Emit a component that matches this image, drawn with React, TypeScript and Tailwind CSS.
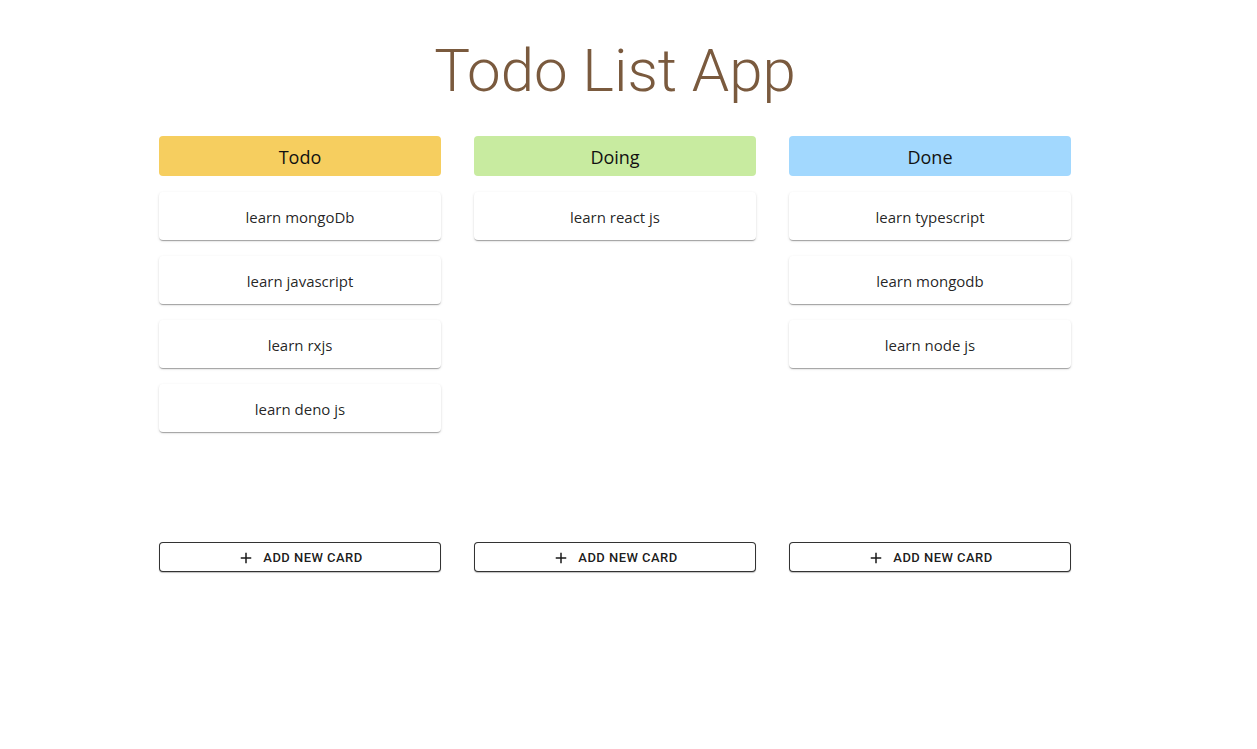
import React from "react";

const columns = [
  { title: "Todo", color: "bg-[#f6ce5f]", cards: ["learn mongoDb", "learn javascript", "learn rxjs", "learn deno js"] },
  { title: "Doing", color: "bg-[#c8eba0]", cards: ["learn react js"] },
  { title: "Done", color: "bg-[#a2d8fe]", cards: ["learn typescript", "learn mongodb", "learn node js"] },
];

function Plus() {
  return (
    <svg width="18" height="18" viewBox="0 0 24 24" fill="currentColor" aria-hidden="true">
      <path d="M19 13h-6v6h-2v-6H5v-2h6V5h2v6h6v2z" />
    </svg>
  );
}

export default function App() {
  return (
    <div className="min-h-[749px] bg-white pr-[27px]">
      <h1 className="pt-[35px] text-center text-[60px] leading-[1.2] font-light text-[#7a5a3e] [font-family:Roboto,sans-serif]">
        Todo List App
      </h1>
      <div className="mt-[29px] flex justify-center">
        <div className="grid grid-cols-[282px_282px_282px] gap-x-[33px]">
          {columns.map((col) => (
            <div key={col.title} className="flex flex-col">
              <div
                className={`${col.color} flex h-[40px] items-center justify-center rounded-[4px] pt-[2px] text-[18px] text-[#111] [font-family:'Open_Sans',sans-serif]`}
              >
                {col.title}
              </div>
              <div className="mt-4 flex h-[334px] flex-col gap-4">
                {col.cards.map((c) => (
                  <div
                    key={c}
                    className="flex h-[48px] items-center justify-center rounded-[4px] bg-white pt-[2px] text-[15px] text-[rgba(0,0,0,0.87)] shadow-[0px_2px_1px_-1px_rgba(0,0,0,0.2),0px_1px_1px_0px_rgba(0,0,0,0.14),0px_1px_3px_0px_rgba(0,0,0,0.12)] [font-family:'Open_Sans',sans-serif]"
                  >
                    {c}
                  </div>
                ))}
              </div>
              <button className="mt-4 flex h-[30px] items-center justify-center gap-[8px] rounded-[4px] border border-[rgba(0,0,0,0.8)] bg-white pt-[1px] text-[13px] font-medium tracking-[0.46px] text-[rgba(0,0,0,0.9)] uppercase shadow-[0px_1px_1px_0px_rgba(0,0,0,0.25)] [font-family:Roboto,sans-serif]">
                <Plus />
                <span>Add new card</span>
              </button>
            </div>
          ))}
        </div>
      </div>
    </div>
  );
}
